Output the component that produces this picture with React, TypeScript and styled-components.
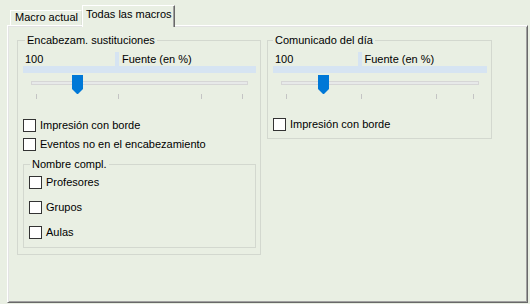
import React from "react";
import styled, { createGlobalStyle } from "styled-components";

const BG = "#e9efe3";

const Global = createGlobalStyle`
  html, body { margin: 0; padding: 0; background: ${BG}; }
  body {
    font-family: "Liberation Sans", Arial, sans-serif;
    font-size: 11px;
    color: #000;
    width: 530px;
    height: 304px;
    overflow: hidden;
  }
  * { box-sizing: border-box; }
`;

const Window = styled.div`
  width: 530px;
  height: 304px;
  padding: 5px 0 0 7px;
`;

const TabStrip = styled.div`
  display: flex;
  align-items: flex-end;
  height: 20px;
  padding-left: 3px;
`;

const Tab = styled.div<{ $active?: boolean }>`
  position: relative;
  z-index: ${(p) => (p.$active ? 1 : 0)};
  height: ${(p) => (p.$active ? 22 : 15)}px;
  margin-bottom: ${(p) => (p.$active ? -2 : 0)}px;
  padding: ${(p) => (p.$active ? "2px 2px 0 3px" : "0 3px 0 4px")};
  border-top: 1px solid #fff;
  border-left: 1px solid #fff;
  border-right: 1px solid ${(p) => (p.$active ? "#696969" : "#dde3d8")};
  box-shadow: ${(p) => (p.$active ? "inset -1px 0 0 #a0a0a0" : "none")};
  background: ${BG};
  line-height: 13px;
  white-space: nowrap;
`;

const Panel = styled.div`
  width: 521px;
  height: 278px;
  border: 1px solid;
  border-color: #fff #696969 #696969 #fff;
  box-shadow: inset 1px 1px 0 #e3e3e3, inset -1px -1px 0 #a0a0a0;
  padding: 8px 0 0 9px;
  display: flex;
  align-items: flex-start;
  gap: 6px;
`;

const Group = styled.fieldset<{ $w?: number; $h: number; $pt?: number }>`
  margin: 0;
  min-width: 0;
  width: ${(p) => (p.$w ? `${p.$w}px` : "100%")};
  height: ${(p) => p.$h}px;
  border: 1px solid #d3d8cf;
  padding: ${(p) => p.$pt ?? 5}px 4px 0 5px;
  display: flex;
  flex-direction: column;
`;

const Legend = styled.legend<{ $ml?: number }>`
  padding: 0 2px;
  margin-left: ${(p) => p.$ml ?? 2}px;
  line-height: 13px;
`;

const FontRow = styled.div`
  display: grid;
  grid-template-columns: 39.5% 1fr;
  column-gap: 4px;
  background: #d6e4f2;
  padding-bottom: 7px;
`;

const Cell = styled.div<{ $pad: number }>`
  background: ${BG};
  height: 14px;
  line-height: 14px;
  padding-left: ${(p) => p.$pad}px;
  white-space: nowrap;
`;

const SliderWrap = styled.div`
  position: relative;
  height: 28px;
  margin: 0 8px;
  padding-top: 8px;
`;

const Track = styled.div`
  height: 4px;
  border: 1px solid #d6d6d6;
  background: #e7e9e9;
`;

const Thumb = styled.svg`
  position: absolute;
  top: 2px;
  width: 11px;
  height: 19px;
  display: block;
`;

const Tick = styled.div`
  position: absolute;
  top: 21px;
  width: 1px;
  height: 5px;
  background: #c4c4c4;
`;

const CheckList = styled.div<{ $mt: number; $gap: number }>`
  display: flex;
  flex-direction: column;
  gap: ${(p) => p.$gap}px;
  margin-top: ${(p) => p.$mt}px;
`;

const CheckRow = styled.label`
  display: flex;
  align-items: center;
  gap: 4px;
  height: 13px;
  line-height: 13px;
  white-space: nowrap;
`;

const Box = styled.span`
  flex: none;
  width: 13px;
  height: 13px;
  border: 1px solid #333;
  background: #fff;
`;

const SubGroupSpacer = styled.div`
  margin-top: 7px;
`;

function Slider({ min, max, value, ticks }: { min: number; max: number; value: number; ticks: number[] }) {
  const f = (v: number) => (v - min) / (max - min);
  return (
    <SliderWrap>
      <Track />
      {ticks.map((t) => (
        <Tick key={t} style={{ left: `calc(5px + (100% - 11px) * ${f(t)})` }} />
      ))}
      <Thumb viewBox="0 0 11 19" style={{ left: `calc((100% - 11px) * ${f(value)})` }}>
        <polygon points="0,0 11,0 11,14 6,19 5,19 0,14" fill="#0078d7" />
      </Thumb>
    </SliderWrap>
  );
}

function Check({ label }: { label: string }) {
  return (
    <CheckRow>
      <Box />
      <span>{label}</span>
    </CheckRow>
  );
}

function FontSize() {
  return (
    <>
      <FontRow>
        <Cell $pad={2}>100</Cell>
        <Cell $pad={3}>Fuente (en %)</Cell>
      </FontRow>
      <Slider min={50} max={300} value={100} ticks={[50, 150, 250, 300]} />
    </>
  );
}

export default function App() {
  return (
    <>
      <Global />
      <Window>
        <TabStrip>
          <Tab>Macro actual</Tab>
          <Tab $active>Todas las macros</Tab>
        </TabStrip>
        <Panel>
          <Group $w={244} $h={221}>
            <Legend>Encabezam. sustituciones</Legend>
            <FontSize />
            <CheckList $mt={18} $gap={6}>
              <Check label="Impresión con borde" />
              <Check label="Eventos no en el encabezamiento" />
            </CheckList>
            <SubGroupSpacer>
              <Group $h={90}>
                <Legend $ml={1}>Nombre compl.</Legend>
                <CheckList $mt={0} $gap={12}>
                  <Check label="Profesores" />
                  <Check label="Grupos" />
                  <Check label="Aulas" />
                </CheckList>
              </Group>
            </SubGroupSpacer>
          </Group>
          <Group $w={225} $h={105}>
            <Legend $ml={0}>Comunicado del día</Legend>
            <FontSize />
            <CheckList $mt={17} $gap={5}>
              <Check label="Impresión con borde" />
            </CheckList>
          </Group>
        </Panel>
      </Window>
    </>
  );
}
